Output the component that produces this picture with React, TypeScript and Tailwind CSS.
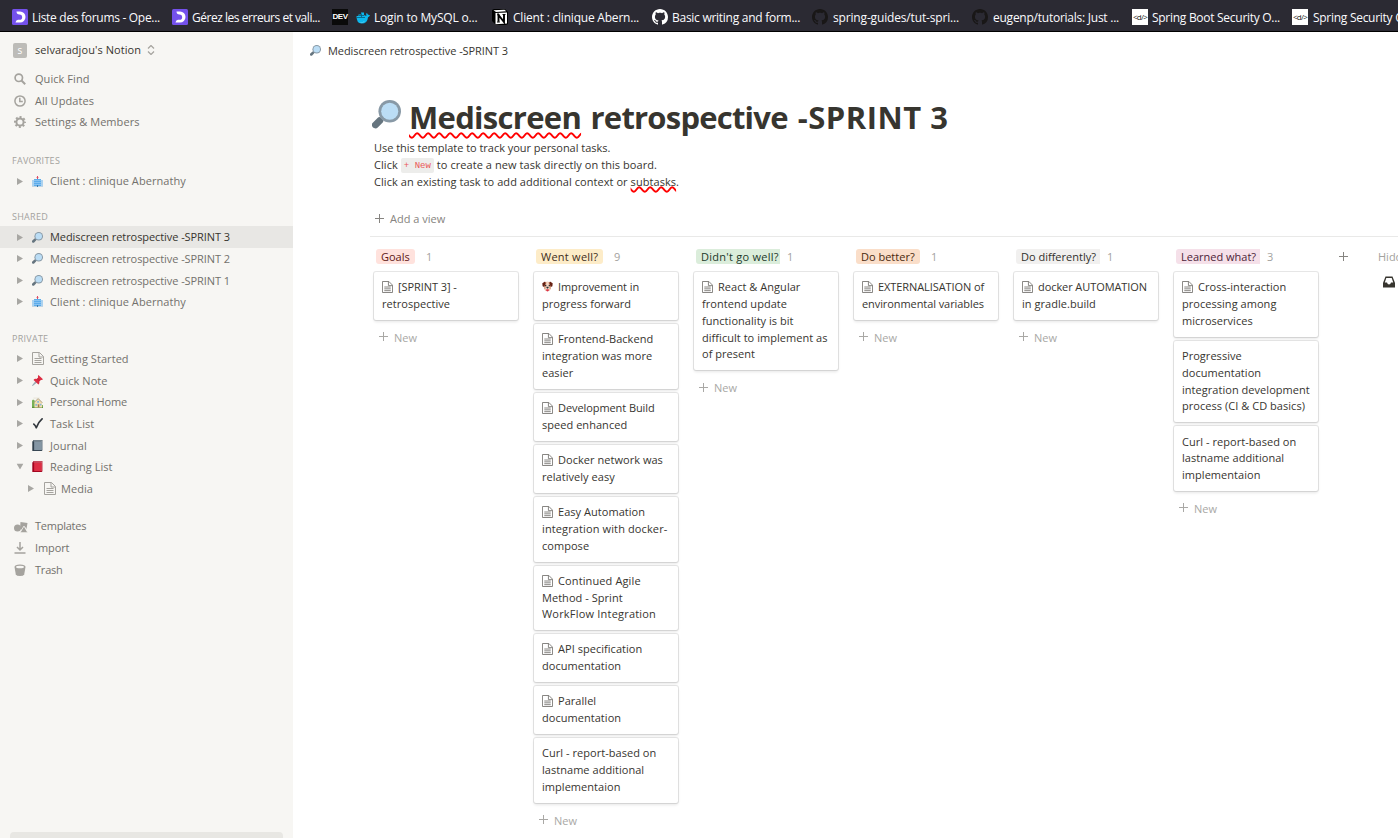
import type { ReactNode } from 'react';

type IconProps = { className?: string };

function Magnifier({ className }: IconProps) {
  return (
    <svg viewBox="0 0 36 36" className={className}>
      <path fill="#66757F" d="M3.3 35.1a4.1 4.1 0 0 1-2.3-7l6.2-6.2c1.1-1.1 3-1 4.200.2l1.7 1.700c1.200 1.200 1.300 3.100.2 4.200l-6.200 6.200a4.100 4.100 0 0 1-3.800.9z" />
      <path fill="#8899A6" d="M10.5 22l3.500-3.500 3.500 3.500-3.500 3.500z" />
      <circle cx="22" cy="14" r="14" fill="#8899A6" />
      <circle cx="22" cy="14" r="10.600" fill="#BBDDF5" />
    </svg>
  );
}

function Hospital({ className }: IconProps) {
  return (
    <svg viewBox="0 0 11 11" className={className}>
      <path fill="#C3D5E2" d="M0 10h11v1H0z" />
      <path fill="#8CC3EC" d="M0 4h11v6H0z" opacity=".7" />
      <path fill="#5DADEC" d="M2 3h7v7H2z" />
      <path fill="#E7B5C0" d="M4 1h3v1H4z" />
      <path fill="#DD4E66" d="M5 0h1v3H5z" />
      <path fill="#B5DAF5" d="M2 4h7v.6H2zM2 6h7v.6H2zM2 8h7v.5H2z" />
      <path fill="#3B7CB0" d="M5 9h1v2H5z" />
    </svg>
  );
}

function Pushpin({ className }: IconProps) {
  return (
    <svg viewBox="0 0 36 36" className={className}>
      <path fill="#99AAB5" d="M13.500 17.500l5 5L2 36l-2-2z" />
      <path fill="#DD2E44" d="M21 0l15 14c-2 2.500-5 3-7 2l-5 5c1 4-.5 8-3 10L5 16c2-3 5.500-4.500 10-3l5-5c-1-3-.5-6 1-8z" />
      <path fill="#BE1931" d="M15 14l7 7 5-5-7-7z" opacity=".4" />
    </svg>
  );
}

function House({ className }: IconProps) {
  return (
    <svg viewBox="0 0 36 36" className={className}>
      <path fill="#77B255" d="M0 13c0-5 8-6 9 0l2 22H0zM28 26h8v9h-8z" />
      <path fill="#5C913B" d="M0 32h36v4H0z" />
      <path fill="#F4DDB0" d="M8 17L20 5l13 12v17H8z" />
      <path fill="none" stroke="#A79A80" strokeWidth="3" d="M6 19L20 5l14 14" />
      <path fill="#88B8D8" d="M17 13h6v6h-6zM11 23h6v6h-6zM26 22h5v6h-5z" />
      <path fill="#A0794F" d="M19 24h5v10h-5z" />
      <path fill="#DCD5C3" d="M5 2h20v3H5z" opacity=".6" />
    </svg>
  );
}

function Check({ className }: IconProps) {
  return (
    <svg viewBox="0 0 36 36" className={className}>
      <path fill="none" stroke="#31373D" strokeWidth="5.500" strokeLinecap="round" strokeLinejoin="round" d="M6 20q5 4 8 12Q20 14 33 3" />
    </svg>
  );
}

function Book({ className, cover, spine, page }: IconProps & { cover: string; spine: string; page: string }) {
  return (
    <svg viewBox="0 0 36 36" className={className}>
      <path fill={spine} d="M3 3q1-3 4-3h27v33q0 3-3 3H1V5z" />
      <path fill={page} d="M7 2h26v3H5z" />
      <path fill={cover} d="M7 6h25v27H7z" />
      <path fill={page} d="M32 3h2v29h-2z" />
    </svg>
  );
}

function Dog() {
  return (
    <svg viewBox="0 0 36 36" className="mr-[5px] inline-block h-[11px] w-[11px] align-[-1px]">
      <path fill="#D99E82" d="M7 3h22v22l-5 7H12l-5-7z" />
      <path fill="#F5D8C6" d="M15 2h6l3 20 2 8H10l2-8z" />
      <path fill="#662113" d="M1 7l9-5 2 5-5 13-5-3zM35 7l-9-5-2 5 5 13 5-3z" />
      <circle cx="12" cy="15" r="2.500" fill="#292F33" />
      <circle cx="24" cy="15" r="2.500" fill="#292F33" />
      <path fill="#292F33" d="M14 19h8l-1 4-3 2-3-2z" />
      <path fill="#DD2E44" d="M14 27h8v5q-4 5-8 0z" />
    </svg>
  );
}

function PageIcon({ className }: IconProps) {
  return (
    <svg viewBox="0 0 12 13" className={className} fill="none" stroke="currentColor">
      <path d="M.5.5h7l4 4v8H.5zM7 .5V5h4.500M2.500 6.500h7M2.500 8.500h7M2.500 10.500h7" />
    </svg>
  );
}

function Plus({ className }: IconProps) {
  return (
    <svg viewBox="0 0 10 10" className={className} stroke="currentColor" shapeRendering="crispEdges">
      <path d="M4.500 0v9M0 4.500h9" />
    </svg>
  );
}

function OpenClassrooms() {
  return (
    <svg viewBox="0 0 16 16" className="h-4 w-4 shrink-0">
      <rect width="16" height="16" rx="1.500" fill="#7451EB" />
      <path fill="#fff" d="M4.500 2.500h3.500a5.500 5.500 0 0 1 0 11H3.500Q4 10.800 6 10.800h1.500a2.600 2.600 0 0 0 0-5.300Q4.500 5.300 4.500 2.500z" />
    </svg>
  );
}

function NotionMark() {
  return (
    <svg viewBox="0 0 16 16" className="h-4 w-4 shrink-0">
      <path fill="#000" d="M0 1l2-1 11 0 3 3v12l-2 1H4l-4-4z" />
      <path fill="#fff" d="M1.500 1.300L12.500.8l1.800 1.500L4 3zM3.500 4l11.500-.6v11.200L3.500 15.200z" />
      <path fill="none" stroke="#000" strokeWidth="1.900" d="M6.500 12.800V6l5.500 7V5.500" />
      <path stroke="#000" d="M5 5.800h2.500M10.500 5.500H13.500M5 13h2.800" />
    </svg>
  );
}

function GitHub({ className }: IconProps) {
  return (
    <svg viewBox="0 0 16 16" className={className} fill="currentColor">
      <path d="M8 0C3.580 0 0 3.580 0 8c0 3.540 2.290 6.530 5.470 7.590.4.070.55-.17.55-.38 0-.19-.01-.82-.01-1.490-2.010.37-2.530-.49-2.690-.94-.09-.23-.48-.94-.82-1.130-.28-.15-.68-.52-.01-.53.63-.01 1.080.58 1.230.82.72 1.210 1.870.87 2.330.66.07-.52.28-.87.51-1.070-1.780-.2-3.640-.89-3.640-3.950 0-.87.31-1.590.82-2.150-.08-.2-.36-1.020.08-2.120 0 0 .67-.21 2.200.82.64-.18 1.320-.27 2-.27s1.360.09 2 .27c1.530-1.040 2.200-.82 2.200-.82.44 1.100.16 1.920.08 2.120.51.56.82 1.270.82 2.150 0 3.070-1.870 3.750-3.650 3.950.29.25.54.73.54 1.480 0 1.070-.01 1.930-.01 2.200 0 .21.15.46.55.38A8 8 0 0 0 16 8c0-4.420-3.580-8-8-8z" />
    </svg>
  );
}

function Whale() {
  return (
    <svg viewBox="0 0 14 13" className="mr-[4px] h-[13px] w-[14px] shrink-0">
      <path fill="#0DB7ED" d="M.5 5h2V3.500H5V1.500h3V4q1 1 2.500.8Q9.800 3 10.500 2q1.300.5 1.500 1.800 1.300-.2 2 .5-.7 1.700-2 1.900-.5 6.300-6.500 6.300Q.5 12.500.500 5z" />
      <path stroke="#085A78" strokeWidth=".8" d="M1 6.500h8M3 4.500h5M5.500 2.500V6" />
      <path fill="#A5E7F8" d="M3 11q3 1 6-1-2 2.500-6 1z" />
    </svg>
  );
}

function DevMark() {
  return (
    <span className="flex h-4 w-4 shrink-0 items-center justify-center bg-[#0a0a0a] font-['Liberation_Sans'] text-[8px] font-bold tracking-[-0.5px] text-white">DEV</span>
  );
}

function CodeMark() {
  return (
    <span className="flex h-4 w-4 shrink-0 items-center justify-center bg-white text-[8px] tracking-[-0.7px] text-[#222]">&lt;d/&gt;</span>
  );
}

function Bookmark({ icon, children, className }: { icon: ReactNode; children: ReactNode; className: string }) {
  return (
    <div className="flex h-full w-40 shrink-0 items-center whitespace-nowrap">
      {icon}
      <span className={`flex items-center pt-px ${className}`}>{children}</span>
    </div>
  );
}

function BookmarkBar() {
  return (
    <div className="flex h-8 shrink-0 overflow-hidden border-b border-black bg-[#2b2a33] pt-[3px] pl-3 text-[12px] text-[#fbfbfe]">
      <Bookmark icon={<OpenClassrooms />} className="pl-1 tracking-[-0.3px]">Liste des forums - Ope...</Bookmark>
      <Bookmark icon={<OpenClassrooms />} className="pl-1 tracking-[-0.47px]">Gérez les erreurs et vali...</Bookmark>
      <Bookmark icon={<DevMark />} className="pl-2 tracking-[-0.18px]"><Whale />Login to MySQL o...</Bookmark>
      <Bookmark icon={<NotionMark />} className="pl-[5px] tracking-[-0.21px]">Client : clinique Abern...</Bookmark>
      <Bookmark icon={<GitHub className="h-4 w-4 shrink-0 text-white" />} className="pl-1 tracking-[-0.27px]">Basic writing and form...</Bookmark>
      <Bookmark icon={<GitHub className="h-4 w-4 shrink-0 text-[#191717]" />} className="pl-[5px] tracking-[-0.16px]">spring-guides/tut-spri...</Bookmark>
      <Bookmark icon={<GitHub className="h-4 w-4 shrink-0 text-[#191717]" />} className="pl-[5px] tracking-[-0.245px]">eugenp/tutorials: Just ...</Bookmark>
      <Bookmark icon={<CodeMark />} className="pl-1 tracking-[-0.28px]">Spring Boot Security O...</Bookmark>
      <Bookmark icon={<CodeMark />} className="pl-[5px] tracking-[-0.28px]">Spring Security O...</Bookmark>
    </div>
  );
}

function MenuRow({ icon, children }: { icon: ReactNode; children: ReactNode }) {
  return (
    <div className="flex h-[21.6px] items-center pl-[14px]">
      <span className="flex w-[21px] text-[#a5a39e]">{icon}</span>
      {children}
    </div>
  );
}

function TreeRow({ icon, children, active, open, nested, className = '' }: { icon: ReactNode; children: ReactNode; active?: boolean; open?: boolean; nested?: boolean; className?: string }) {
  return (
    <div className={`flex h-[21.6px] items-center ${nested ? 'pl-7' : 'pl-[17px]'} ${active ? 'bg-[#e8e7e4] font-medium text-[#37352f]' : ''}`}>
      <svg viewBox="0 0 6 7" className={`h-[7px] w-[6px] fill-[#a8a7a3] ${open ? 'rotate-90' : ''}`}><path d="M0 0l6 3.500L0 7z" /></svg>
      <span className={`flex ${nested ? 'ml-[10px] w-[17px]' : 'ml-[9px] w-[18px]'} text-[#a5a39e]`}>{icon}</span>
      <span className={`pt-px ${className}`}>{children}</span>
    </div>
  );
}

const sectionLabel = 'flex items-end pb-[3.400px] pl-3 text-[9px] leading-[13px] tracking-[0.27px] text-[#a3a29e]';
const small = 'h-[11px] w-[11px]';

function Sidebar() {
  return (
    <aside className="flex w-[293px] shrink-0 flex-col bg-[#f7f6f3] text-[11px] tracking-[0.06px] whitespace-nowrap text-[#73716c]">
      <div className="flex h-[36.4px] items-center pl-[13px] font-medium text-[#37352f]">
        <span className="mr-2 flex h-[15px] w-[14px] items-center justify-center rounded-[2px] bg-[#bdbcb8] text-[10px] text-white">s</span>
        <span>selvaradjou's Notion</span>
        <svg viewBox="0 0 8 10" className="ml-[6px] h-[10px] w-2" fill="none" stroke="#a5a39e" strokeWidth="1.200"><path d="M1 3.500l3-3 3 3M1 6.500l3 3 3-3" /></svg>
      </div>
      <MenuRow icon={<svg viewBox="0 0 12 12" className="h-3 w-3" fill="none" stroke="currentColor" strokeWidth="1.700"><circle cx="4.800" cy="4.800" r="3.700" /><path d="M7.500 7.500L11.200 11.200" strokeWidth="2" /></svg>}>Quick Find</MenuRow>
      <MenuRow icon={<svg viewBox="0 0 12 12" className="h-3 w-3" fill="none" stroke="currentColor" strokeWidth="1.500"><circle cx="6" cy="6" r="5.100" /><path d="M5.800 2.700v3.700h3" /></svg>}>All Updates</MenuRow>
      <MenuRow icon={<svg viewBox="0 0 12 12" className="h-3 w-3" fill="none" stroke="currentColor"><circle cx="6" cy="6" r="3.600" strokeWidth="2" /><circle cx="6" cy="6" r="5" strokeWidth="2" strokeDasharray="1.960 1.960" strokeDashoffset=".98" /></svg>}>Settings &amp; Members</MenuRow>

      <div className={`h-[37.2px] ${sectionLabel}`}>FAVORITES</div>
      <TreeRow icon={<Hospital className={small} />}>Client : clinique Abernathy</TreeRow>

      <div className={`h-[34.4px] ${sectionLabel}`}>SHARED</div>
      <TreeRow active icon={<Magnifier className={small} />} className="tracking-[-0.07px]">Mediscreen retrospective -SPRINT 3</TreeRow>
      <TreeRow icon={<Magnifier className={small} />} className="tracking-[-0.07px]">Mediscreen retrospective -SPRINT 2</TreeRow>
      <TreeRow icon={<Magnifier className={small} />} className="tracking-[-0.07px]">Mediscreen retrospective -SPRINT 1</TreeRow>
      <TreeRow icon={<Hospital className={small} />}>Client : clinique Abernathy</TreeRow>

      <div className={`h-[35.400px] ${sectionLabel}`}>PRIVATE</div>
      <TreeRow icon={<PageIcon className="h-[13px] w-3" />}>Getting Started</TreeRow>
      <TreeRow icon={<Pushpin className={small} />}>Quick Note</TreeRow>
      <TreeRow icon={<House className={small} />} className="tracking-[-0.12px]">Personal Home</TreeRow>
      <TreeRow icon={<Check className={small} />}>Task List</TreeRow>
      <TreeRow icon={<Book className={small} cover="#8496A4" spine="#31414D" page="#B9C5CE" />}>Journal</TreeRow>
      <TreeRow open icon={<Book className={small} cover="#DD2E44" spine="#A0041E" page="#E8929B" />}>Reading List</TreeRow>
      <TreeRow nested icon={<PageIcon className="h-[13px] w-3" />}>Media</TreeRow>

      <div className="h-[16.500px]" />
      <MenuRow icon={<svg viewBox="0 0 14 12" className="h-3 w-[14px]" fill="currentColor"><path d="M6.500 1L13.500 2 12.500 8 11 6 8.500 9 6 8z" /><circle cx="3.500" cy="7" r="3.500" /><path stroke="#f7f6f3" strokeWidth=".8" d="M10 5l3.800 6.700H6z" /></svg>}><span className="tracking-[-0.24px]">Templates</span></MenuRow>
      <MenuRow icon={<svg viewBox="0 0 12 12" className="h-3 w-3" fill="none" stroke="currentColor" strokeWidth="1.500"><path d="M6 0v7.500M3 5l3 3 3-3M.5 11h11" /></svg>}><span className="tracking-[-0.1px]">Import</span></MenuRow>
      <MenuRow icon={<svg viewBox="0 0 12 12" className="h-3 w-3"><path fill="currentColor" d="M.5 3Q.5.500 6 .500T11.500 3l-1.300 7.500Q9.500 12 6 12t-4.200-1.500z" /><ellipse cx="6" cy="3" rx="4" ry="1.300" fill="#f7f6f3" /></svg>}><span className="tracking-[-0.2px]">Trash</span></MenuRow>
      <div className="mt-auto mr-[10px] ml-[10px] h-[6px] rounded-t-[4px] bg-[#e8e7e3]" />
    </aside>
  );
}

type CardData = { icon?: 'page' | 'dog'; lines: string[] };
type ColumnData = { title: string; count: number; tag: string; cards: CardData[] };

const columns: ColumnData[] = [
  { title: 'Goals', count: 1, tag: 'rounded-[3px] mr-[11px] w-[39px] bg-[#ffe2dd] text-[#5d1715]', cards: [{ icon: 'page', lines: ['[SPRINT 3] -', 'retrospective'] }] },
  {
    title: 'Went well?', count: 9, tag: 'rounded-[3px] mr-[11px] w-[67px] tracking-[0.25px] bg-[#fdecc8] text-[#402c1b]',
    cards: [
      { icon: 'dog', lines: ['Improvement in', 'progress forward'] },
      { icon: 'page', lines: ['Frontend-Backend', 'integration was more', 'easier'] },
      { icon: 'page', lines: ['Development Build', 'speed enhanced'] },
      { icon: 'page', lines: ['Docker network was', 'relatively easy'] },
      { icon: 'page', lines: ['Easy Automation', 'integration with docker-', 'compose'] },
      { icon: 'page', lines: ['Continued Agile', 'Method - Sprint', 'WorkFlow Integration'] },
      { icon: 'page', lines: ['API specification', 'documentation'] },
      { icon: 'page', lines: ['Parallel', 'documentation'] },
      { lines: ['Curl - report-based on', 'lastname additional', 'implementaion'] },
    ],
  },
  { title: "Didn't go well?", count: 1, tag: 'rounded-l-[3px] mr-[7px] w-[84px] tracking-[0.26px] bg-[#dbeddb] text-[#1c3829]', cards: [{ icon: 'page', lines: ['React & Angular', 'frontend update', 'functionality is bit', 'difficult to implement as', 'of present'] }] },
  { title: 'Do better?', count: 1, tag: 'rounded-[3px] mr-[11px] w-16 bg-[#fadec9] text-[#49290e]', cards: [{ icon: 'page', lines: ['EXTERNALISATION of', 'environmental variables'] }] },
  { title: 'Do differently?', count: 1, tag: 'rounded-l-[3px] mr-[7px] w-[84px] bg-[#f1f0ef] text-[#32302c]', cards: [{ icon: 'page', lines: ['docker AUTOMATION', 'in gradle.build'] }] },
  {
    title: 'Learned what?', count: 3, tag: 'rounded-l-[3px] mr-[7px] w-[84px] bg-[#f5e0e9] text-[#4c2337]',
    cards: [
      { icon: 'page', lines: ['Cross-interaction', 'processing among', 'microservices'] },
      { lines: ['Progressive', 'documentation', 'integration development', 'process (CI & CD basics)'] },
      { lines: ['Curl - report-based on', 'lastname additional', 'implementaion'] },
    ],
  },
];

function tracking(line: string) {
  if (line === 'integration with docker-' || line === 'Continued Agile') return 'tracking-[0.12px]';
  if (line === 'WorkFlow Integration') return 'tracking-[0.2px]';
  if (line.startsWith('EXTERNAL') || line.startsWith('docker AUTO') || line.startsWith('environmental')) return 'tracking-[-0.08px]';
  if (line.startsWith('[SPRINT') || line.startsWith('Improvement') || line.startsWith('Development')) return 'tracking-[-0.08px]';
  return 'tracking-[0.04px]';
}

function Card({ icon, lines }: CardData) {
  return (
    <div className="mb-1 rounded-[2px] bg-white pt-[7.200px] pb-[7.200px] pl-2 leading-[16.800px] shadow-[0_0_0_1px_rgba(15,15,15,0.1),0_2px_3px_rgba(15,15,15,0.1)]">
      {lines.map((line, i) => (
        <div key={line} className={`h-[16.800px] ${tracking(line)}`}>
          {i === 0 && icon === 'page' && <PageIcon className="mr-[5px] inline-block h-3 w-[11px] align-[-2px] text-[#7d7b77]" />}
          {i === 0 && icon === 'dog' && <Dog />}
          {line}
        </div>
      ))}
    </div>
  );
}

function Column({ title, count, tag, cards }: ColumnData) {
  return (
    <div className="mr-4 w-36 shrink-0">
      <div className="flex h-[35.100px] items-center pt-[3.800px] pl-[2px]">
        <span className={`block h-[15px] shrink-0 overflow-hidden pl-[5px] leading-[15px] ${tag}`}>{title}</span>
        <span className="pt-px font-normal text-[#a3a29e]">{count}</span>
      </div>
      {cards.map((card) => <Card key={card.lines[0]} {...card} />)}
      <div className="flex h-[27px] items-center pt-[.6px] pl-[5px] font-normal text-[#a9a8a5]">
        <Plus className="-mt-px mr-[5px] h-[10px] w-[10px]" />
        New
      </div>
    </div>
  );
}

export default function App() {
  return (
    <div className="flex h-[838px] w-[1398px] flex-col overflow-hidden bg-white font-['Open_Sans','Noto_Sans',sans-serif]">
      <BookmarkBar />
      <div className="flex min-h-0 flex-1">
        <Sidebar />
        <main className="flex min-w-0 flex-1 flex-col overflow-hidden text-[11px] whitespace-nowrap text-[#37352f]">
          <div className="flex h-[38px] items-center pl-[17px] tracking-[-0.07px]">
            <Magnifier className="-mt-[2px] mr-[7px] h-[11px] w-[11px]" />
            Mediscreen retrospective -SPRINT 3
          </div>
          <header className="pl-[79px]">
            <h1 className="mt-[25px] flex h-[44px] items-center text-[31px] leading-[44px] font-bold">
              <Magnifier className="-mt-[6px] mr-[8px] h-[29px] w-[29px]" />
              <span className="tracking-[-0.7px] underline decoration-[#ff0000] decoration-wavy decoration-[1.500px] underline-offset-[3px] [text-decoration-skip-ink:none]">Mediscreen</span>
              <span className="ml-[9.500px] tracking-[-0.78px]">retrospective</span>
              <span className="ml-[10px] tracking-[0.5px]">-SPRINT 3</span>
            </h1>
            <div className="pl-[2px] leading-[17px] tracking-[0.06px]">
              <p className="tracking-[-0.03px]">Use this template to track your personal tasks.</p>
              <p className="flex items-center">
                Click
                <code className="mx-[3px] mt-[2px] flex h-[15px] items-center rounded-[2px] bg-[#ededeb] px-[3px] pt-[2px] font-['Liberation_Mono',monospace] text-[9px] tracking-normal text-[#eb5757]">+ New</code>
                to create a new task directly on this board.
              </p>
              <p>
                Click an existing task to add additional context or{' '}
                <span className="underline decoration-[#ff0000] decoration-wavy decoration-[1.500px] underline-offset-[0px] [text-decoration-skip-ink:none]">subtasks</span>.
              </p>
            </div>
          </header>
          <div className="ml-[77px] flex h-[47px] items-center border-b border-[#e9e9e8] pt-[13px] pl-[5px] text-[#868480]">
            <Plus className="-mt-px mr-[5px] h-[10px] w-[10px]" />
            Add a view
          </div>
          <div className="flex pl-[81px] font-medium">
            {columns.map((column) => <Column key={column.title} {...column} />)}
            <div className="flex h-[35.100px] w-11 shrink-0 items-center pt-[5px] pl-[5px] text-[#868480]">
              <Plus className="h-[10px] w-[10px]" />
            </div>
            <div className="shrink-0 font-normal text-[#a3a29e]">
              <div className="flex h-[35.100px] items-center pt-[5px]">Hidden columns</div>
              <svg viewBox="0 0 12 12" className="mt-[4px] ml-[4.500px] h-3 w-3"><path fill="#37352f" d="M2.500.500h7L12 7v4.500H0V7z" /><path fill="#fff" d="M3.300 2h5.400l1.500 4.500H8q-.5 2-2 2t-2-2H1.800z" /></svg>
            </div>
          </div>
        </main>
      </div>
    </div>
  );
}
